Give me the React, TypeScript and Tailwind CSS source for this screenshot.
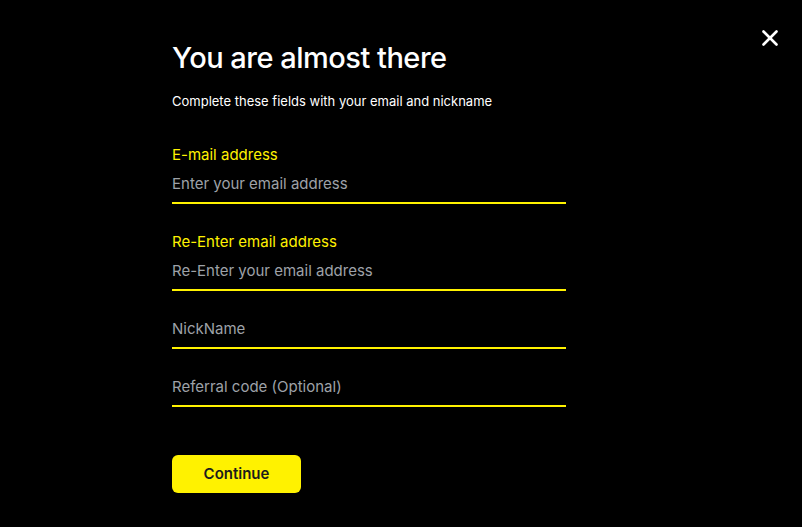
import { X } from 'lucide-react'

const fields = [
  { label: 'E-mail address', placeholder: 'Enter your email address', type: 'email' },
  { label: 'Re-Enter email address', placeholder: 'Re-Enter your email address', type: 'email' },
  { label: '', placeholder: 'NickName', type: 'text' },
  { label: '', placeholder: 'Referral code (Optional)', type: 'text' },
]

export default function App() {
  return (
    <div
      className="relative h-[527px] w-full overflow-hidden bg-black text-white"
      style={{ fontFamily: 'Inter, "Noto Sans", sans-serif' }}
    >
      <button
        type="button"
        aria-label="Close"
        className="absolute left-[757px] top-[25px] flex h-[26px] w-[26px] items-center justify-center text-white"
      >
        <X className="h-[26px] w-[26px]" strokeWidth={2.4} />
      </button>

      <div className="flex flex-col pl-[172px] pt-[38px]">
        <h1 className="text-[29px] font-medium leading-[40px] tracking-[-0.5px]">You are almost there</h1>
        <p className="mt-[14px] text-[13px] leading-[18px]">Complete these fields with your email and nickname</p>

        <form className="mt-[25px] flex w-[394px] flex-col gap-[18px]">
          {fields.map((field) => (
            <div key={field.placeholder} className="flex flex-col">
              {field.label && (
                <label className="pt-[10px] text-[15px] leading-[19px] text-[#fff200]">{field.label}</label>
              )}
              <input
                type={field.type}
                placeholder={field.placeholder}
                className="h-10 border-b-2 border-[#fff200] bg-transparent text-[15px] text-white outline-none placeholder:text-[#9ea2a8]"
              />
            </div>
          ))}

          <button
            type="button"
            className="mt-[30px] h-[38px] w-[129px] rounded-[6px] bg-[#fff200] text-[15px] font-semibold text-[#1c1c1c]"
          >
            Continue
          </button>
        </form>
      </div>
    </div>
  )
}
